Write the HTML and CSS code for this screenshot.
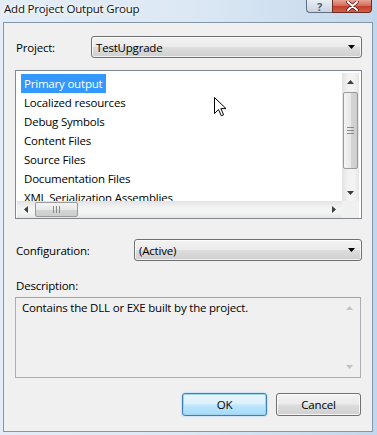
FILE: index.html
```html
<!DOCTYPE html>
<html lang="en">
<head>
<meta charset="UTF-8">
<meta name="viewport" content="width=device-width, initial-scale=1.0">
<title>Add Project Output Group</title>
<link rel="stylesheet" href="styles.css">
</head>
<body>

<div class="window">
  <div class="titlebar">
    <span class="title">Add Project Output Group</span>
    <div class="caption-buttons">
      <div class="cap-btn help">?</div>
      <div class="cap-btn close">
        <svg width="13" height="10" viewBox="0 0 13 10"><path d="M2 1 L11 9 M11 1 L2 9" stroke="#4a1410" stroke-width="3.4" stroke-linecap="round"/><path d="M2 1 L11 9 M11 1 L2 9" stroke="#fff" stroke-width="2" stroke-linecap="round"/></svg>
      </div>
    </div>
  </div>

  <div class="client">
    <div class="field-row">
      <label class="field-label project-label">Project:</label>
      <div class="combo project-combo">
        <span>TestUpgrade</span>
        <svg class="combo-arrow" width="7" height="4" viewBox="0 0 7 4"><path d="M0 0 H7 L3.5 4 Z" fill="#000"/></svg>
      </div>
    </div>

    <div class="listbox">
      <div class="list-grid">
        <div class="list-items">
          <div class="list-item selected">Primary output</div>
          <div class="list-item">Localized resources</div>
          <div class="list-item">Debug Symbols</div>
          <div class="list-item">Content Files</div>
          <div class="list-item">Source Files</div>
          <div class="list-item">Documentation Files</div>
          <div class="list-item">XML Serialization Assemblies</div>
        </div>
        <div class="vscroll">
          <div class="sb-btn"><svg width="7" height="4" viewBox="0 0 7 4"><path d="M0 4 H7 L3.5 0 Z" fill="#3d3d3d"/></svg></div>
          <div class="sb-track">
            <div class="v-thumb"><span class="grip"></span></div>
          </div>
          <div class="sb-btn"><svg width="7" height="4" viewBox="0 0 7 4"><path d="M0 0 H7 L3.5 4 Z" fill="#3d3d3d"/></svg></div>
        </div>
        <div class="hscroll">
          <div class="sb-btn"><svg width="4" height="7" viewBox="0 0 4 7"><path d="M4 0 V7 L0 3.5 Z" fill="#3d3d3d"/></svg></div>
          <div class="sb-track h">
            <div class="h-thumb"><span class="grip"></span></div>
          </div>
          <div class="sb-btn"><svg width="4" height="7" viewBox="0 0 4 7"><path d="M0 0 V7 L4 3.5 Z" fill="#3d3d3d"/></svg></div>
        </div>
        <div class="corner"></div>
      </div>
      <svg class="cursor" width="13" height="20" viewBox="0 0 13 20"><path d="M0.5 0.5 L0.5 16.5 L4.5 12.5 L7.3 18.8 L9.6 17.8 L6.9 11.6 L12 11.6 Z" fill="#fff" stroke="#000" stroke-width="1" stroke-linejoin="miter"/></svg>
    </div>

    <div class="field-row config-row">
      <label class="field-label config-label">Configuration:</label>
      <div class="combo config-combo">
        <span>(Active)</span>
        <svg class="combo-arrow" width="7" height="4" viewBox="0 0 7 4"><path d="M0 0 H7 L3.5 4 Z" fill="#000"/></svg>
      </div>
    </div>

    <div class="desc-label">Description:</div>
    <div class="desc-box">
      <div class="desc-text">Contains the DLL or EXE built by the project.</div>
      <div class="desc-scroll">
        <svg width="7" height="4" viewBox="0 0 7 4"><path d="M0 4 H7 L3.5 0 Z" fill="#c2c2c2"/></svg>
        <svg width="7" height="4" viewBox="0 0 7 4"><path d="M0 0 H7 L3.5 4 Z" fill="#c2c2c2"/></svg>
      </div>
    </div>

    <div class="buttons">
      <button class="btn default">OK</button>
      <button class="btn">Cancel</button>
    </div>
  </div>
</div>

</body>
</html>
```

FILE: styles.css
```css
body {
  margin: 0;
  padding: 0;
  font-family: "Segoe UI", "Open Sans", sans-serif;
  font-size: 11.5px;
  letter-spacing: -0.2px;
  color: #000;
  background-color: #c6d9ec;
}

.window {
  width: 377px;
  height: 435px;
  display: flex;
  flex-direction: column;
  background: linear-gradient(to right, #e4edf7 0%, #dce8f4 50%, #c3d7ec 100%);
}

.titlebar {
  height: 22px;
  display: flex;
  justify-content: space-between;
  align-items: flex-start;
}

.title {
  padding: 1px 0 0 4px;
  line-height: 16px;
  font-size: 11.5px;
  color: #111;
  text-shadow: 0 0 6px #fff, 0 0 3px #fff;
}

.caption-buttons {
  display: flex;
  margin-right: 5px;
}

.cap-btn {
  height: 13px;
  box-sizing: border-box;
  border: 1px solid #5f6f82;
  border-top: none;
  display: flex;
  align-items: center;
  justify-content: center;
}

.cap-btn.help {
  width: 26px;
  border-right: none;
  border-radius: 0 0 0 4px;
  background: linear-gradient(#e9eef4, #c9d3df);
  color: #52606e;
  font-size: 11px;
  line-height: 11px;
  font-weight: bold;
}

.cap-btn.close {
  width: 40px;
  border-color: #6b2a22;
  border-radius: 0 0 4px 0;
  background: linear-gradient(#e8a597 0%, #d7705f 45%, #c4402c 55%, #d2604a 100%);
}

.client {
  flex: 1;
  margin: 0 4px 3px 3px;
  border: 1px solid #8496aa;
  background-color: #f0f0f0;
  padding: 13px 10px 0 11px;
  display: flex;
  flex-direction: column;
}

.field-row {
  display: flex;
  align-items: center;
  height: 22px;
}

.field-label {
  padding-left: 1px;
  box-sizing: border-box;
}

.project-label {
  width: 76px;
}

.config-label {
  width: 119px;
}

.config-row {
  margin-top: 20px;
}

.combo {
  flex: 1;
  height: 22px;
  box-sizing: border-box;
  border: 1px solid #707070;
  border-radius: 3px;
  background: linear-gradient(#f3f3f3 0%, #ebebeb 48%, #dddddd 52%, #cfcfcf 100%);
  box-shadow: inset 0 0 0 1px rgba(255, 255, 255, 0.7);
  display: flex;
  align-items: center;
  justify-content: space-between;
  padding: 0 6px 0 4px;
}

.listbox {
  position: relative;
  margin-top: 12px;
  height: 149px;
  box-sizing: border-box;
  border: 1px solid #828790;
  background-color: #fff;
  padding: 2px 2px 0 1px;
}

.list-grid {
  display: grid;
  grid-template-columns: 1fr 17px;
  grid-template-rows: 1fr 17px;
  height: 100%;
}

.list-items {
  overflow: hidden;
  padding: 1px 0 0 4px;
}

.list-item {
  height: 19px;
  line-height: 19px;
  padding: 0 4px 0 3px;
  white-space: nowrap;
}

.list-item.selected {
  display: inline-block;
  background-color: #3399ff;
  color: #fff;
}

.vscroll {
  display: flex;
  flex-direction: column;
  background: linear-gradient(to right, #e3e3e3, #f3f3f3 40%, #f3f3f3 70%, #e6e6e6);
}

.hscroll {
  display: flex;
  background: linear-gradient(#e3e3e3, #f3f3f3 40%, #f3f3f3 70%, #e6e6e6);
}

.sb-btn {
  width: 17px;
  height: 17px;
  flex: none;
  display: flex;
  align-items: center;
  justify-content: center;
}

.sb-track {
  flex: 1;
}

.v-thumb {
  margin: 2px 0 0 1px;
  width: 15px;
  height: 77px;
  box-sizing: border-box;
  border: 1px solid #9a9a9a;
  border-radius: 2px;
  background: linear-gradient(to right, #f4f4f4, #e8e8e8 50%, #d6d6d6 51%, #cdcdcd);
  display: flex;
  align-items: center;
  justify-content: center;
}

.v-thumb .grip {
  width: 7px;
  height: 5px;
  border-top: 1px solid #8a8a8a;
  border-bottom: 1px solid #8a8a8a;
  background: linear-gradient(transparent 2px, #8a8a8a 2px, #8a8a8a 3px, transparent 3px);
}

.h-thumb {
  margin: 1px 0 0 1px;
  width: 43px;
  height: 15px;
  box-sizing: border-box;
  border: 1px solid #9a9a9a;
  border-radius: 2px;
  background: linear-gradient(#f4f4f4, #e8e8e8 50%, #d6d6d6 51%, #cdcdcd);
  display: flex;
  align-items: center;
  justify-content: center;
}

.h-thumb .grip {
  width: 5px;
  height: 7px;
  border-left: 1px solid #8a8a8a;
  border-right: 1px solid #8a8a8a;
  background: linear-gradient(to right, transparent 2px, #8a8a8a 2px, #8a8a8a 3px, transparent 3px);
}

.corner {
  background-color: #f0f0f0;
}

.cursor {
  position: absolute;
  left: 198px;
  top: 26px;
}

.desc-label {
  margin-top: 17px;
  line-height: 16px;
  padding-left: 1px;
}

.desc-box {
  margin: 3px 1px 0 0;
  height: 81px;
  box-sizing: border-box;
  border: 1px solid #abadb3;
  border-top-color: #a0a3aa;
  background-color: #f0f0f0;
  display: flex;
}

.desc-text {
  flex: 1;
  padding: 2px 6px;
  line-height: 16px;
}

.desc-scroll {
  width: 17px;
  margin-right: 2px;
  display: flex;
  flex-direction: column;
  justify-content: space-between;
  align-items: center;
  padding: 8px 0 8px;
}

.buttons {
  display: flex;
  justify-content: flex-end;
  gap: 9px;
  margin-top: 15px;
  padding-right: 1px;
}

.btn {
  width: 85px;
  height: 23px;
  font-family: "Segoe UI", "Open Sans", sans-serif;
  font-size: 11.5px;
  letter-spacing: -0.2px;
  color: #000;
  border: 1px solid #707070;
  border-radius: 3px;
  background: linear-gradient(#f2f2f2 0%, #ebebeb 48%, #dddddd 52%, #cfcfcf 100%);
  box-shadow: inset 0 0 0 1px rgba(255, 255, 255, 0.8);
  padding: 0;
}

.btn.default {
  border-color: #3c7fb1;
  background: linear-gradient(#eaf6fd 0%, #d9f0fc 48%, #bee6fd 52%, #a7d9f5 100%);
  box-shadow: inset 0 0 0 1px #9fd4f3, 0 0 2px #7fc4ee;
}
```
